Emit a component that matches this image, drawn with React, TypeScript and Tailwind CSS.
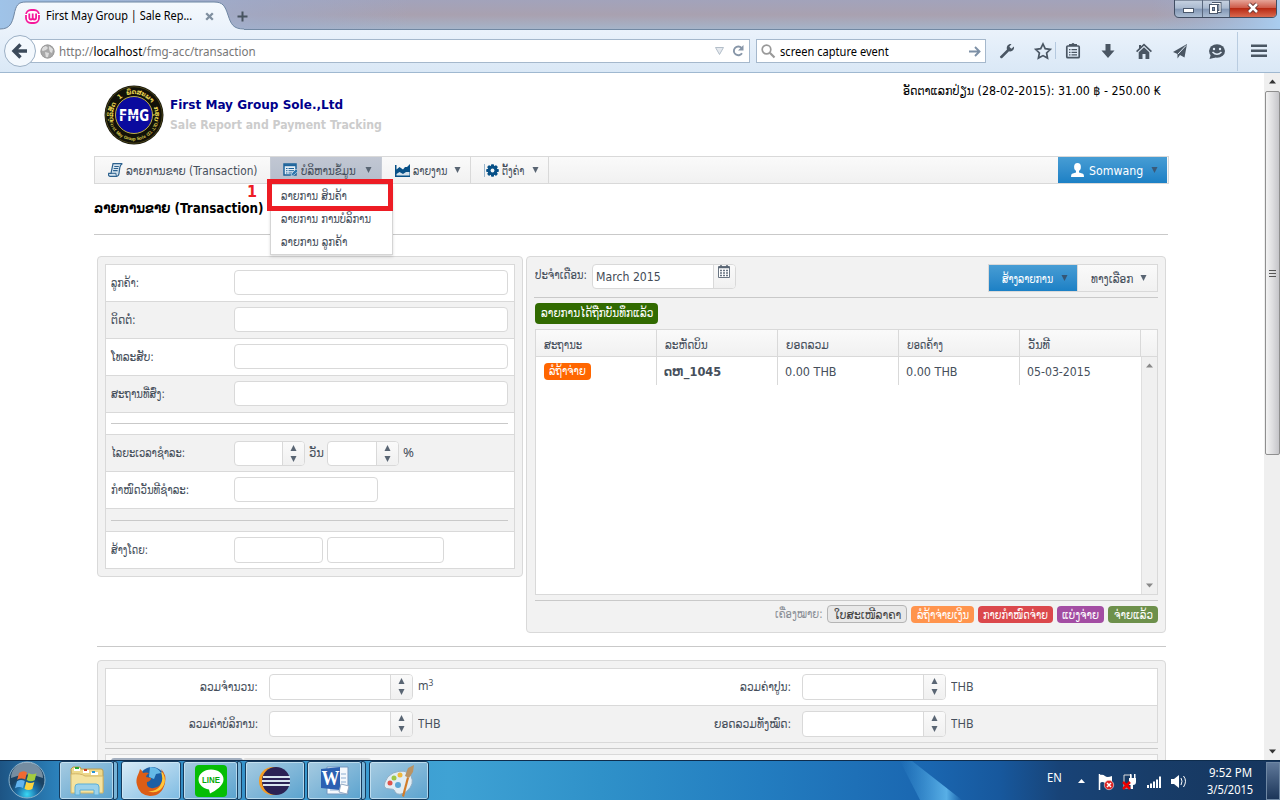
import { useLayoutEffect, useRef, type ReactNode } from "react";

/* Single line of text stretched to the width of its box. */
function Fit({ className, children }: { className: string; children: ReactNode }) {
  const box = useRef<HTMLSpanElement>(null);
  const inner = useRef<HTMLSpanElement>(null);
  useLayoutEffect(() => {
    if (!box.current || !inner.current) return;
    const natural = inner.current.offsetWidth;
    if (natural > 0) inner.current.style.transform = `scaleX(${box.current.clientWidth / natural})`;
  }, []);
  return (
    <span ref={box} className={`inline-block shrink-0 whitespace-nowrap ${className}`}>
      <span ref={inner} className="inline-block origin-left">{children}</span>
    </span>
  );
}

function Caret({ up = false, className = "text-[#596573]" }: { up?: boolean; className?: string }) {
  return (
    <svg className={`h-[6px] w-[7px] shrink-0 ${className}`} viewBox="0 0 7 6">
      <path d={up ? "M3.5 0L6.5 6H.5z" : "M.5 0h6L3.5 6z"} fill="currentColor" />
    </svg>
  );
}

function Field({ className }: { className: string }) {
  return <div className={`shrink-0 rounded-[4px] border border-[#d9d9d9] bg-white ${className}`} />;
}

function Spinner({ className }: { className: string }) {
  return (
    <div className={`flex shrink-0 overflow-hidden rounded-[4px] border border-[#d9d9d9] bg-white ${className}`}>
      <div className="flex-1" />
      <div className="flex w-[22px] flex-col items-center justify-center gap-[5px] border-l border-[#d9d9d9] bg-gradient-to-b from-[#fafafa] to-[#f0f0f0] pb-px">
        <Caret up />
        <Caret />
      </div>
    </div>
  );
}

function FormRow({ label, w, gray, children }: { label: string; w: string; gray?: boolean; children: ReactNode }) {
  return (
    <div className={`flex h-[37px] items-center border-b border-[#d9d9d9] pb-px pl-[5px] ${gray ? "bg-[#f2f2f2]" : "bg-white"}`}>
      <div className="w-[123px] shrink-0"><Fit className={w}>{label}</Fit></div>
      {children}
    </div>
  );
}

function Browser() {
  return (
    <div className="relative h-[73px] shrink-0">
      <div className="relative h-[30px] bg-gradient-to-b from-[#a2a3bb] via-[#a9a1b0] to-[#a5b5cb]">
        <svg className="absolute inset-0 h-[30px] w-[1280px]" viewBox="0 0 1280 30">
          <defs>
            <linearGradient id="glass" x1="0" x2="1"><stop stopColor="#9fc3e8" /><stop offset=".2" stopColor="#9eabcb" stopOpacity=".6" /><stop offset=".32" stopColor="#9eabcb" stopOpacity="0" /><stop offset=".9" stopColor="#9eabcb" stopOpacity="0" /><stop offset="1" stopColor="#a9cdf0" /></linearGradient>
            <linearGradient id="tab" x1="0" x2="0" y1="0" y2="1"><stop stopColor="#f5f9fd" /><stop offset="1" stopColor="#eaf2fb" /></linearGradient>
            <linearGradient id="red" x1="0" x2="0" y1="0" y2="1"><stop stopColor="#e6a498" /><stop offset=".45" stopColor="#ce5c4a" /><stop offset=".5" stopColor="#b82a14" /><stop offset="1" stopColor="#d9694f" /></linearGradient>
            <linearGradient id="win" x1="0" x2="0" y1="0" y2="1"><stop stopColor="#c8d3e2" /><stop offset=".48" stopColor="#a8b8ce" /><stop offset=".5" stopColor="#8195b3" /><stop offset="1" stopColor="#aebfd4" /></linearGradient>
          </defs>
          <rect width="1280" height="30" fill="url(#glass)" />
          <path d="M0 29.5H1280" stroke="#7188a3" />
          <path d="M0 30V29C10 29 12 23 14 15C16 5 18 2 26 2H214C223 2 225 6 228 15C231 24 233 29 244 29V30z" fill="url(#tab)" />
          <path d="M0 29C10 29 12 23 14 15C16 5 18 2 26 2H214C223 2 225 6 228 15C231 24 233 29 244 29" fill="none" stroke="#6f87a3" />
          <path d="M1174.500 0V13Q1174.500 17.500 1179 17.500H1272Q1276.500 17.500 1276.500 13V0z" fill="url(#win)" stroke="#414d62" />
          <path d="M1230 0V17H1272Q1276 17 1276 13V0z" fill="url(#red)" />
          <path d="M1202.500 0V17M1229.500 0V17" stroke="#5a687e" />
          <rect x="1183.500" y="8.500" width="10" height="4" fill="#fff" stroke="#4b586c" />
          <path d="M1212 3.500h8v8h-2" fill="none" stroke="#4b586c" strokeWidth="3" />
          <path d="M1212 3.500h8v8h-2" fill="none" stroke="#fff" strokeWidth="1.200" />
          <rect x="1209.500" y="4.500" width="8" height="9" fill="#fff" stroke="#4b586c" /><rect x="1212.500" y="7.500" width="2" height="3" fill="#8195b3" stroke="#4b586c" />
          <path d="M1249 4l8 8m0-8l-8 8" stroke="#66322f" strokeWidth="4.500" /><path d="M1249 4l8 8m0-8l-8 8" stroke="#fff" strokeWidth="2.500" />
        </svg>
        <div className="relative flex h-[30px] items-center pl-[25px] pt-[2px]">
          <svg className="h-[15px] w-[15px]" viewBox="0 0 15 15"><rect x="1" y="1" width="13" height="13" rx="5" fill="#fff" stroke="#f5189b" strokeWidth="1.800" /><path d="M0 5.500h3M12 5.500h3" stroke="#fff" strokeWidth="1" /><path d="M4.300 4.500v4q0 2 1.700 2t1.700-2v-4m0 4q0 2 1.700 2t1.700-2v-4" fill="none" stroke="#f5189b" strokeWidth="1.800" /></svg>
          <div className="ml-[6px] flex w-[155px] font-['Noto_Sans'] text-[12px] leading-[18px] text-black"><Fit className="w-[146px]">First May Group | Sale Rep...</Fit></div>
          <svg className="ml-[4px] h-[9px] w-[9px]" viewBox="0 0 9 9"><path d="M1.200 1.200l6.600 6.600m0-6.600L1.200 7.800" stroke="#7f8f9f" strokeWidth="2.300" /></svg>
          <svg className="ml-[23px] h-[11px] w-[11px]" viewBox="0 0 11 11"><path d="M5.500 .5v10M.5 5.500h10" stroke="#47535f" strokeWidth="2" /></svg>
        </div>
      </div>
      <div className="flex h-[43px] items-center border-b border-[#9fb8d0] bg-gradient-to-b from-[#eaf2fb] to-[#dae8f6] pl-[4px] font-['Noto_Sans'] text-[12px]">
        <svg className="relative z-10 h-[33px] w-[33px] shrink-0" viewBox="0 0 33 33"><circle cx="16" cy="16" r="15.500" fill="#f3f8fd" stroke="#9bafc4" /><path d="M23 16H10.500M16.500 9.500L10 16l6.500 6.500" fill="none" stroke="#3c4a5a" strokeWidth="3.400" /></svg>
        <div className="-ml-[7px] flex h-[24px] w-[720px] shrink-0 items-center border border-[#a5b8cc] bg-white pl-[9px] text-[#777]">
          <svg className="h-[15px] w-[15px]" viewBox="0 0 15 15"><circle cx="7.500" cy="7.500" r="7" fill="#a9a9a9" /><path d="M2 3L6 2 8 4 6 6 3 7 1 6zM9 2l4 3-1 4-2-1-1-3zM5 8l4 1-1 4-2 1z" fill="#dcdcdc" /><circle cx="7.500" cy="7.500" r="6.500" fill="none" stroke="#9d9d9d" /></svg>
          <Fit className="ml-[4px] w-[197px] pt-[2px]">http://<span className="text-black">localhost</span>/fmg-acc/transaction</Fit>
          <svg className="ml-auto h-[8px] w-[9px]" viewBox="0 0 9 8"><path d="M.5.5h8l-4 7z" fill="#e5e9ee" stroke="#b3bec9" /></svg>
          <svg className="ml-[8px] mr-[5px] h-[12px] w-[12px]" viewBox="0 0 12 12"><path d="M9.600 3A4.400 4.400 0 1 0 10 8.200" fill="none" stroke="#8796a8" strokeWidth="1.900" /><path d="M11.500 0v5.500H6z" fill="#8796a8" /></svg>
        </div>
        <div className="ml-[6px] flex h-[24px] w-[230px] shrink-0 items-center border border-[#a5b8cc] bg-white px-[4px] text-black">
          <svg className="h-[15px] w-[15px]" viewBox="0 0 15 15"><circle cx="5.500" cy="5.500" r="4.300" fill="none" stroke="#999" strokeWidth="1.700" /><path d="M8.800 8.800l4.700 4.700" stroke="#999" strokeWidth="2.200" /></svg>
          <Fit className="ml-[4px] w-[109px] pt-[2px]">screen capture event</Fit>
          <svg className="ml-auto h-[11px] w-[12px]" viewBox="0 0 12 11"><path d="M0 5.500h10M6 1l4.500 4.500L6 10" fill="none" stroke="#7d90a6" strokeWidth="1.900" /></svg>
        </div>
        <svg className="h-[42px] w-[294px] shrink-0 text-[#4a5663]" viewBox="986 30 294 42" fill="currentColor">
          <path d="M1000.500 56l6.500-6.500c-1-3.500 1.500-6 4.500-5.500l-2.200 2.700 2 2 2.700-2.200c.5 3.200-2 5.700-5 4.700l-6.500 6.500q-1 1.200-2.100.1t.1-1.800z" />
          <path d="M1043 44l2.200 4.700 5.100.7-3.700 3.600.9 5.100-4.500-2.500-4.600 2.500 1-5.100-3.700-3.600 5-.7z" fill="none" stroke="currentColor" strokeWidth="1.700" />
          <path d="M1055.500 42v17" stroke="#b5c9df" />
          <rect x="1066.800" y="46" width="12.400" height="11.700" rx="1" fill="none" stroke="currentColor" strokeWidth="1.700" /><path d="M1069 46v-2h2.500q1.500-2 3 0h2.500v2zM1069 49h1.500v1.300H1069zm2.500 0h5.500v1.300h-5.500zM1069 51.700h1.500v1.300H1069zm2.500 0h5.500v1.300h-5.500zM1069 54.300h1.500v1.300H1069zm2.500 0h5.500v1.300h-5.500z" />
          <path d="M1105.500 44h5v6.500h4l-6.500 7.500-6.500-7.500h4z" />
          <path d="M1144 43.500l8 7.500-1.200 1.200-6.800-6.400-6.800 6.400-1.200-1.200 3-2.800V45h2v1.300zM1138.700 52.200l5.300-5 5.300 5V59h-3.800v-5h-3v5h-3.800z" />
          <path d="M1187 44l-2.500 13.500-4.500-2.500-2.500 3.500V54l-4.500-2z" /><path d="M1186 45.500l-8 8.500" stroke="#e1ecf8" />
          <ellipse cx="1217" cy="51" rx="8" ry="6.800" /><path d="M1211 54l-1.500 5 6-1.500z" /><circle cx="1214" cy="49" r="1.200" fill="#e2edf8" /><circle cx="1220" cy="49" r="1.200" fill="#e2edf8" /><path d="M1212.500 52q4.500 4.500 9 0" fill="none" stroke="#e2edf8" strokeWidth="1.500" />
          <path d="M1237.500 32v39" stroke="#b9cce0" />
          <path d="M1251 44.500h16v2.500h-16zm0 5h16v2.500h-16zm0 5h16v2.500h-16z" />
        </svg>
      </div>
    </div>
  );
}

const topArc = ["ບໍ", "ລິ", "ສັ", "ດ", " ", "1", " ", "ພຶ", "ດ", "ສ", "ະ", "ພ", "າ", " ", "ກ", "ຣຸ", "ບ"];
const bottomArc = Array.from("First May Group Sole CO.,LTD.");

function Logo() {
  return (
    <svg className="h-[60px] w-[60px] shrink-0" viewBox="0 0 60 60">
      <circle cx="30" cy="30" r="29.500" fill="#111108" /><circle cx="30" cy="30" r="28.300" fill="none" stroke="#6f6321" strokeWidth=".6" />
      <circle cx="30" cy="30" r="18.500" fill="#0a0a9e" stroke="#bfae47" strokeWidth="1" />
      {topArc.map((c, i) => <text key={i} x="30" y="9" textAnchor="middle" transform={`rotate(${-101 + i * 12.600} 30 30)`} className="font-['DejaVu_Sans'] text-[6.5px] font-bold" fill="#e8d44f">{c}</text>)}
      {bottomArc.map((c, i) => <text key={i} x="30" y="55.500" textAnchor="middle" transform={`rotate(${72 - i * 5.150} 30 30)`} className="font-['Liberation_Sans'] text-[4.6px] font-bold" fill="#d5c24a">{c}</text>)}
      <text x="15" y="35.500" textLength="30" lengthAdjust="spacingAndGlyphs" className="font-['DejaVu_Sans'] text-[16px] font-bold" fill="#fff">FMG</text>
      <path d="M15 30.500h21" stroke="#0a0a9e" strokeWidth=".8" />
    </svg>
  );
}

function Menu() {
  return (
    <div className="relative flex h-[28px] w-[1075px] border border-[#d9d9d9] bg-gradient-to-b from-[#fafafa] to-[#f1f1f1]">
      <div className="flex w-[175px] items-center pl-[13px]">
        <svg className="h-[14px] w-[15px]" viewBox="0 0 15 14"><path d="M5 .7h9.300q-2 1-2.500 4L11 10.500q-.5 2.800-2.300 2.800H2Q0 13 .7 10.300H3z" fill="#d5e4ef" stroke="#2c618e" strokeWidth="1.200" /><path d="M3 10.300h5q-.3 2.800 1 3" fill="none" stroke="#2c618e" /><path d="M6.300 3.500h4.500M5.700 5.500h4.500M5.100 7.700h4.500" stroke="#2c618e" strokeWidth="1.200" /></svg>
        <Fit className="ml-[3px] w-[131px] pt-[2px]">ລາຍການຂາຍ (Transaction)</Fit>
      </div>
      <div className="flex w-[112px] items-center border-x border-[#c5cbd5] bg-gradient-to-b from-[#c1c7d3] to-[#b5bdcb] pl-[12px]">
        <svg className="h-[14px] w-[15px]" viewBox="0 0 15 14"><path d="M1 1h12v11H1z" fill="#e3edf5" stroke="#1d639b" strokeWidth="1.500" /><path d="M1 2.200h12" stroke="#1d639b" strokeWidth="2" /><path d="M3 5.500h1.500m1 0H11M3 7.700h1.500m1 0H11M3 10h1.500m1 0H9" stroke="#1d639b" /><path d="M8 13l1-3 4-4 2 2-4 4z" fill="#2e77ae" stroke="#e5edf5" strokeWidth=".5" /></svg>
        <Fit className="ml-[3px] w-[55px] pt-[2px]">ບໍລິຫານຂໍ້ມູນ</Fit>
        <Caret className="ml-[9px] text-[#596573]" />
      </div>
      <div className="flex w-[89px] items-center border-r border-[#d9d9d9] pl-[13px]">
        <svg className="h-[13px] w-[15px]" viewBox="0 0 15 13"><path d="M0 1h1.500v4.500L4.500 3l3.500 2.500L10 3h2l3-3v13H0z" fill="#075087" /><path d="M1.500 10L4.500 8 8 10l3-2h3.500v3.500h-13z" fill="#d4e1eb" /></svg>
        <Fit className="ml-[3px] w-[34px] pt-[2px]">ລາຍງານ</Fit>
        <Caret className="ml-[7px] text-[#596573]" />
      </div>
      <div className="flex w-[78px] items-center border-r border-[#d9d9d9] pl-[13px]">
        <svg className="h-[13px] w-[15px]" viewBox="-7.500 -6.500 15 13"><path d="M-7-6.500v13" stroke="#9ab6cc" />{[0, 45, 90, 135].map((a) => <rect key={a} x="-1.500" y="-6.300" width="3" height="12.600" rx=".8" fill="#075087" transform={`translate(1 0) rotate(${a})`} />)}<circle cx="1" r="4.900" fill="#075087" /><circle cx="1" r="1.900" fill="#f3f5f6" /></svg>
        <Fit className="ml-[3px] w-[22px] pt-[2px]">ຕັ້ງຄ່າ</Fit>
        <Caret className="ml-[8px] text-[#596573]" />
      </div>
      <div className="ml-auto mr-px flex w-[109px] items-center bg-gradient-to-b from-[#479dd4] to-[#1b80c5] pl-[13px] text-white">
        <svg className="h-[14px] w-[13px]" viewBox="0 0 13 14"><ellipse cx="6.500" cy="4" rx="3.400" ry="4" fill="#fff" /><path d="M5 6h3v3.500l4 1.200q1 .5 1 3.300H0q0-2.800 1-3.300l4-1.200z" fill="#fff" /></svg>
        <Fit className="ml-[5px] w-[54px] pt-[2px]">Somwang</Fit>
        <Caret className="ml-[8px] text-[#3a5a78]" />
      </div>
      <div className="absolute left-[175px] top-[27px] z-10 flex h-[71px] w-[123px] flex-col border border-[#d5d5d5] bg-white pl-[10px] shadow-[0_2px_3px_#0002]">
        <div className="flex h-[23px] items-center"><Fit className="w-[66px]">ລາຍການ ສິນຄ້າ</Fit></div>
        <div className="flex h-[23px] items-center"><Fit className="w-[90px]">ລາຍການ ການບໍລິການ</Fit></div>
        <div className="flex h-[24px] items-center"><Fit className="w-[66px]">ລາຍການ ລູກຄ້າ</Fit></div>
      </div>
      <div className="absolute left-[172px] top-[22px] z-20 h-[32px] w-[126px] border-[5px] border-[#ed1c24]" />
      <div className="absolute left-[152px] top-[26px] text-[16px] font-bold leading-[18px] text-[#ed1c24]">1</div>
    </div>
  );
}

function CustomerForm() {
  return (
    <div className="h-[321px] w-[426px] shrink-0 rounded-[4px] border border-[#d9d9d9] bg-[#f2f2f2] p-[7px]">
      <div className="border border-b-0 border-[#d9d9d9]">
        <FormRow label="ລູກຄ້າ:" w="w-[28px]"><Field className="h-[25px] w-[274px]" /></FormRow>
        <FormRow label="ຕິດຕໍ່:" w="w-[25px]" gray><Field className="h-[25px] w-[274px]" /></FormRow>
        <FormRow label="ໂທລະສັບ:" w="w-[43px]"><Field className="h-[25px] w-[274px]" /></FormRow>
        <FormRow label="ສະຖານທີ່ສົ່ງ:" w="w-[54px]" gray><Field className="h-[25px] w-[274px]" /></FormRow>
        <div className="flex h-[22px] items-center border-b border-[#d9d9d9] bg-white px-[5px]"><div className="h-px w-[397px] bg-[#c9c9c9]" /></div>
        <FormRow label="ໄລຍະເວລາຊຳລະ:" w="w-[74px]" gray>
          <Spinner className="mt-[2px] h-[25px] w-[71px]" />
          <Fit className="ml-[4px] w-[15px]">ວັນ</Fit>
          <Spinner className="ml-[3px] mt-[2px] h-[25px] w-[72px]" />
          <Fit className="ml-[4px] w-[11px] font-['Noto_Sans']">%</Fit>
        </FormRow>
        <FormRow label="ກຳໜົດວັນທີຊຳລະ:" w="w-[78px]"><Field className="h-[25px] w-[144px]" /></FormRow>
        <div className="flex h-[23px] items-center border-b border-[#d9d9d9] px-[5px]"><div className="h-px w-[397px] bg-[#c9c9c9]" /></div>
        <FormRow label="ສ້າງໂດຍ:" w="w-[37px]">
          <Field className="mt-px h-[26px] w-[89px]" />
          <Field className="ml-[4px] mt-px h-[26px] w-[117px]" />
        </FormRow>
      </div>
    </div>
  );
}

const columns = [
  { label: "ສະຖານະ", w: "w-[38px]" },
  { label: "ລະຫັດບິນ", w: "w-[43px]" },
  { label: "ຍອດລວມ", w: "w-[43px]" },
  { label: "ຍອດຄ້າງ", w: "w-[36px]" },
  { label: "ວັນທີ", w: "w-[22px]" },
];

function Transactions() {
  return (
    <div className="flex h-[377px] w-[640px] shrink-0 flex-col rounded-[4px] border border-[#d9d9d9] bg-[#f2f2f2] px-[7px] pt-[7px]">
      <div className="flex h-[34px] items-start border-b border-[#c9c9c9] pl-px">
        <Fit className="mt-[3px] w-[52px]">ປະຈຳເດືອນ:</Fit>
        <div className="ml-[5px] flex h-[25px] w-[144px] rounded-[4px] border border-[#d9d9d9] bg-white pl-[3px]">
          <div className="flex flex-1 items-center text-[#444b55]"><Fit className="w-[65px]">March 2015</Fit></div>
          <div className="flex w-[22px] justify-center rounded-r-[3px] border-l border-[#d9d9d9] bg-gradient-to-b from-[#fafafa] to-[#f0f0f0]">
            <svg className="mr-[2px] h-[13px] w-[12px]" viewBox="0 0 12 13"><path d="M.5 1.500h11v11H.5z" fill="#fff" stroke="#6a7582" /><path d="M.5 2.500h11M3 0v2m6-2v2" stroke="#596573" strokeWidth="1.500" /><path d="M2 5.500h8M2 8h8M2 10.500h8" stroke="#6a7582" strokeDasharray="2 1" strokeWidth="1.300" /></svg>
          </div>
        </div>
        <div className="ml-auto flex h-[28px] w-[170px] border border-[#d9d9d9] bg-gradient-to-b from-[#fafafa] to-[#f1f1f1]">
          <div className="flex w-[88px] items-center bg-gradient-to-b from-[#479dd4] to-[#1b80c5] pl-[13px] text-white">
            <Fit className="w-[51px] pt-[2px]">ສ້າງລາຍການ</Fit><Caret className="ml-[8px] text-[#355675]" />
          </div>
          <div className="flex flex-1 items-center border-l border-[#d9d9d9] pl-[13px]"><Fit className="w-[42px] pt-[2px]">ທາງເລືອກ</Fit><Caret className="ml-[7px] text-[#596573]" /></div>
        </div>
      </div>
      <div className="ml-px mt-[5px] flex h-[21px] w-[123px] items-center justify-center rounded-[4px] bg-[#316a00] pb-[2px] text-white"><Fit className="w-[112px]">ລາຍການໄດ້ຖືກບັນທຶກແລ້ວ</Fit></div>
      <div className="ml-px mt-[5px] flex h-[266px] w-[623px] flex-col border border-[#d9d9d9] bg-white">
        <div className="flex h-[27px] shrink-0 border-b border-[#d9d9d9] bg-gradient-to-b from-[#fafafa] to-[#f1f1f1]">
          {columns.map((c) => <div key={c.w + c.label} className="flex w-[121px] items-center border-r border-[#d9d9d9] pl-[8px] pt-[4px]"><Fit className={c.w}>{c.label}</Fit></div>)}
        </div>
        <div className="flex flex-1">
          <div className="flex h-[28px]">
            <div className="flex w-[121px] items-center border-r border-[#d9d9d9] pl-[8px]"><div className="flex h-[17px] w-[47px] items-center justify-center rounded-[4px] bg-[#ff6600] text-white"><Fit className="w-[37px]">ລໍຖ້າຈ່າຍ</Fit></div></div>
            <div className="flex w-[121px] items-center border-r border-[#d9d9d9] pl-[7px] pt-px font-bold"><Fit className="w-[57px]">ດຫ_1045</Fit></div>
            <div className="flex w-[121px] items-center border-r border-[#d9d9d9] pl-[7px] pt-px"><Fit className="w-[52px]">0.00 THB</Fit></div>
            <div className="flex w-[121px] items-center border-r border-[#d9d9d9] pl-[7px] pt-px"><Fit className="w-[52px]">0.00 THB</Fit></div>
            <div className="flex w-[120px] items-center pl-[7px] pt-px"><Fit className="w-[64px]">05-03-2015</Fit></div>
          </div>
          <div className="ml-px flex flex-1 flex-col items-center justify-between border-l border-[#dfdfdf] bg-[#f0f0f0] py-[6px] text-[#888]">
            <svg className="h-[5px] w-[7px]" viewBox="0 0 7 5"><path d="M0 4.500h7L3.500.5z" fill="currentColor" /></svg>
            <svg className="h-[5px] w-[7px]" viewBox="0 0 7 5"><path d="M0 .5h7L3.500 4.500z" fill="currentColor" /></svg>
          </div>
        </div>
      </div>
      <div className="ml-px mt-[5px] flex items-start justify-end border-t border-[#c9c9c9] pt-[4px] text-white">
        <Fit className="mr-[4px] mt-px w-[48px] text-[#8a8f96]">ເຄື່ອງໝາຍ:</Fit>
        <div className="flex h-[18px] w-[80px] items-center justify-center rounded-[4px] border border-[#b5b5b5] bg-[#e8e8e8] text-[#444]"><Fit className="w-[67px] pt-px">ໃບສະເໜີລາຄາ</Fit></div>
        <div className="ml-[4px] mt-px flex h-[17px] w-[63px] items-center justify-center rounded-[4px] bg-[#ff944d]"><Fit className="w-[52px]">ລໍຖ້າຈ່າຍເງິນ</Fit></div>
        <div className="ml-[4px] mt-px flex h-[17px] w-[75px] items-center justify-center rounded-[4px] bg-[#db484c]"><Fit className="w-[65px]">ກາຍກຳໜົດຈ່າຍ</Fit></div>
        <div className="ml-[4px] mt-px flex h-[17px] w-[47px] items-center justify-center rounded-[4px] bg-[#a34da3]"><Fit className="w-[37px]">ແບ່ງຈ່າຍ</Fit></div>
        <div className="ml-[4px] mt-px flex h-[17px] w-[50px] items-center justify-center rounded-[4px] bg-[#6d904b]"><Fit className="w-[39px]">ຈ່າຍແລ້ວ</Fit></div>
      </div>
    </div>
  );
}

function Total({ label, w, boxClass, children }: { label: string; w: string; boxClass: string; children: ReactNode }) {
  return (
    <div className={`flex items-center ${boxClass}`}>
      <div className="flex flex-1 justify-end"><Fit className={w}>{label}</Fit></div>
      <Spinner className="ml-[11px] h-[26px] w-[144px]" />
      <div className="ml-[5px] w-[26px] font-['Noto_Sans']">{children}</div>
    </div>
  );
}

function Totals() {
  return (
    <div className="mt-[13px] h-[120px] w-[1069px] rounded-t-[4px] border border-[#d9d9d9] bg-[#f2f2f2] p-[7px]">
      <div className="border border-[#d9d9d9]">
        <div className="flex h-[37px] border-b border-[#d9d9d9] bg-white">
          <Total label="ລວມຈຳນວນ:" w="w-[58px]" boxClass="w-[338px]"><Fit className="w-[15px] pb-[2px]">m<sup className="text-[9px]">3</sup></Fit></Total>
          <Total label="ລວມຄ່າປູນ:" w="w-[51px]" boxClass="w-[533px]"><Fit className="w-[22px]">THB</Fit></Total>
        </div>
        <div className="flex h-[36px]">
          <Total label="ລວມຄ່າບໍລິການ:" w="w-[69px]" boxClass="w-[338px]"><Fit className="w-[22px]">THB</Fit></Total>
          <Total label="ຍອດລວມທັງໝົດ:" w="w-[77px]" boxClass="w-[533px]"><Fit className="w-[22px]">THB</Fit></Total>
        </div>
      </div>
      <div className="mt-[5px] h-px bg-[#c9c9c9]" />
      <div className="mt-[5px] flex h-[20px] border border-[#d9d9d9] bg-[#f8f8f8] pl-[5px] pt-[3px]">
        <div className="w-[132px] rounded-t-[3px] bg-[#a3afbf]" /><div className="w-[128px] rounded-t-[3px] bg-[#e0e0e0]" />
      </div>
    </div>
  );
}

function PageScroll() {
  return (
    <div className="flex w-[16px] shrink-0 flex-col items-center bg-[#efefef]">
      <svg className="mt-[6px] h-[5px] w-[7px]" viewBox="0 0 7 5"><path d="M0 4.500h7L3.500.5z" fill="#333" /></svg>
      <div className="mt-[7px] flex h-[364px] w-[15px] flex-col items-center justify-center gap-[2px] rounded-[2px] border border-[#8f8f8f] bg-gradient-to-r from-[#f3f3f3] via-[#dedee0] to-[#c5c5c9]">
        <div className="h-px w-[7px] bg-[#555]" /><div className="h-px w-[7px] bg-[#555]" /><div className="h-px w-[7px] bg-[#555]" />
      </div>
      <svg className="mb-[6px] mt-auto h-[5px] w-[7px]" viewBox="0 0 7 5"><path d="M0 .5h7L3.500 4.500z" fill="#333" /></svg>
    </div>
  );
}

function TaskButton({ stacked, active, children }: { stacked?: boolean; active?: boolean; children: ReactNode }) {
  return (
    <div className="flex h-[39px] w-[62px] shrink-0">
      <div className={`z-10 flex h-[39px] shrink-0 items-center justify-center rounded-[3px] border border-[#163b5d] shadow-[inset_0_0_0_1px_#d7edf9aa] ${stacked ? "w-[55px]" : "w-[60px]"} ${active ? "bg-gradient-to-br from-[#d9ebf6] to-[#7dbbe2]" : "bg-gradient-to-br from-[#a6cbe1] to-[#5aa3cf]"}`}>{children}</div>
      {stacked && <div className="-ml-px h-[39px] w-[5px] rounded-r-[3px] border border-[#163b5d] bg-[#76b3d7]" />}
    </div>
  );
}

function Taskbar() {
  return (
    <div className="relative flex h-[40px] shrink-0 items-start border-t border-[#0e2c4c] bg-[linear-gradient(90deg,#1d5484_0,#2c83bd_60px,#3a9ad0_330px,#3fa2d4_450px,#2f91c9_600px,#237dc0_760px,#1a66b0_930px,#17589d_1000px,#184377_1060px,#183d69_1150px,#16355d_1280px)] font-['Noto_Sans'] text-white">
      <svg className="absolute left-[900px] top-0 h-[39px] w-[70px]" viewBox="0 0 70 39"><defs><linearGradient id="gleam" x1="0" x2="1"><stop stopColor="#54b4ee" stopOpacity="0" /><stop offset=".75" stopColor="#68c2f5" stopOpacity=".8" /><stop offset="1" stopColor="#54b4ee" stopOpacity="0" /></linearGradient></defs><path d="M0 0H12L62 39H20z" fill="url(#gleam)" /></svg>
      <svg className="ml-[8px] h-[38px] w-[38px] shrink-0" viewBox="0 0 38 38">
        <defs><radialGradient id="orb" cy=".9"><stop stopColor="#39d9f5" /><stop offset=".55" stopColor="#1c70aa" /><stop offset="1" stopColor="#1a4263" /></radialGradient></defs>
        <circle cx="19" cy="19" r="18" fill="url(#orb)" stroke="#8bb2cb" /><path d="M3 17A16 16 0 0 1 35 17Q19 10 3 17z" fill="#ffffff66" />
        <path d="M11 12q4-3 8-.5l-1.800 7q-4-2.200-8 .2z" fill="#ef6a32" /><path d="M20.500 12q4 2.500 8 .2l-1.800 7q-4 2.200-8-.2z" fill="#a3cc3f" /><path d="M9 20.300q4-2.500 7.800-.2L15 27q-4-2.300-8 .2z" fill="#62b3ee" /><path d="M18.300 20.800q4 2.300 8 .2l-2 7q-4 2.300-7.800-.2z" fill="#fcd33f" />
      </svg>
      <div className="ml-[13px] flex">
        <TaskButton stacked><svg className="h-[31px] w-[34px]" viewBox="0 0 34 31"><path d="M1 4l2-2h7l1 2h20q2 0 2 2v21H2z" fill="#eed98b" stroke="#bd9d4d" /><path d="M4 3h6v3H4zM13 5h6v3h-6zM21 7h7v3h-7z" fill="#fff" /><path d="M5 2h4v2H5z" fill="#28a531" /><path d="M14 4h3v2h-3z" fill="#cf3d22" /><path d="M22 6h3v2h-3z" fill="#2894d5" /><path d="M1 9q10-1 14 2h18v17H1z" fill="#f4e3a0" stroke="#d2b567" /><path d="M5 30V22q0-3 3-3h18q3 0 3 3v8h-5v-5H10v5z" fill="#9bd2ec" stroke="#5baed8" /></svg></TaskButton>
        <TaskButton active><svg className="h-[32px] w-[32px]" viewBox="0 0 32 32"><circle cx="17" cy="15" r="13" fill="#1c5fa5" /><path d="M15 2q8 0 11 6l-5 1-2 5-5-2z" fill="#65b9e6" /><path d="M26 4q6 6 4 14-3 13-15 13Q4 30 2 20C0 13 4 9 5 4q2 1 3 4 3-1 6 0-3 2-3 4l5 1q0 3-4 4-1 5 4 6 5 1 9-3 5-7 1-16z" fill="#dc5d16" /><path d="M28 8q5 10-3 17-6 4-12 1 8 1 12-5 4-6 1-14z" fill="#ffc73a" /></svg></TaskButton>
        <TaskButton stacked><svg className="h-[32px] w-[32px]" viewBox="0 0 32 32"><rect width="32" height="32" rx="4" fill="#05bd05" /><path d="M16 4.500C9 4.500 3.500 9 3.500 14.500c0 5 4.500 9 10.500 10l1 4c6-3 13.500-8 13.500-14S23 4.500 16 4.500z" fill="#fff" /><text x="7" y="18" textLength="18" lengthAdjust="spacingAndGlyphs" className="font-['Liberation_Sans'] text-[9px] font-bold" fill="#05a805">LINE</text></svg></TaskButton>
        <TaskButton><svg className="h-[32px] w-[34px]" viewBox="0 0 34 32"><circle cx="15" cy="16" r="14" fill="#f59b22" /><circle cx="18" cy="16" r="14" fill="#2b2255" /><path d="M5 12h27M4 16h28M5 20h27" stroke="#d8e5ef" strokeWidth="2" /></svg></TaskButton>
        <TaskButton stacked><svg className="h-[32px] w-[32px]" viewBox="0 0 32 32"><path d="M8 2h21v27H8z" fill="#f4f8fc" stroke="#7397c0" /><path d="M22 9h5m-5 4h5m-5 4h5M11 25h13" stroke="#8caed2" /><path d="M2 4l19-2v23L2 23z" fill="#2b60b2" /><text x="2.500" y="20" textLength="18" lengthAdjust="spacingAndGlyphs" className="font-['Liberation_Serif'] text-[20px] font-bold" fill="#fff">W</text><path d="M22 19l8 2-2 8-8-2z" fill="#fff" stroke="#93a9c3" /></svg></TaskButton>
        <TaskButton><svg className="h-[34px] w-[34px]" viewBox="0 0 34 34"><path d="M11 9Q24 4 29 12q4 8-4 15-8 6-12 1 0-3-5-3Q0 25 3 18q2-6 8-9z" fill="#e2edf4" stroke="#91aec4" /><circle cx="8" cy="19" r="2.500" fill="#df534b" /><circle cx="12" cy="14" r="2.500" fill="#9dc747" /><circle cx="18" cy="11" r="2.500" fill="#efb83d" /><circle cx="16" cy="21" r="3" fill="#5ba6d5" /><path d="M20 32l5-19 2 1-5 19z" fill="#d27c29" /><path d="M23 12l3-8 6-3-1 7-4 6z" fill="#ba9364" /></svg></TaskButton>
      </div>
      <div className="ml-auto flex h-[39px] items-center">
        <Fit className="mb-[5px] mr-[16px] w-[15px] text-[12px]">EN</Fit>
        <svg className="mt-[2px] h-[18px] w-[110px]" viewBox="1079 773 110 18" fill="#fff">
          <path d="M1079 783h7l-3.500-4z" />
          <path d="M1100.500 774v16" stroke="#fff" strokeWidth="1.500" /><path d="M1101 775q3-1 5 1t7 0v7q-4 2-7 0t-5 0z" /><circle cx="1110" cy="785" r="4.700" fill="#d22" stroke="#eee" strokeWidth=".6" /><path d="M1108 783l4 4m0-4l-4 4" stroke="#fff" strokeWidth="1.500" />
          <path d="M1125 775h7v13h-7z" fill="#173a64" stroke="#ddd" /><path d="M1130 778h7v4q0 3-3 3v4h-2v-4h-2zM1131 774h1.500v4h-1.500zM1135 774h1.500v4h-1.500z" /><path d="M1124 782l7 7m0-7l-7 7" stroke="#e00" strokeWidth="2.500" />
          <path d="M1148 785h2v3h-2zm3-1.500h2v4.500h-2zm3-2h2v6.500h-2zm3-2h2v8.500h-2zm3-3h2v11.500h-2z" />
          <path d="M1172 779h3l5-4v13l-5-4h-3z" /><path d="M1182 778q2 3 0 7m2.500-9q4 5 0 11" fill="none" stroke="#fff" />
        </svg>
        <div className="ml-[19px] flex w-[46px] flex-col items-center text-[12px] leading-[17px]"><Fit className="w-[43px]">9:52 PM</Fit><Fit className="w-[46px]">3/5/2015</Fit></div>
        <div className="ml-[13px] h-[38px] w-[14px] border border-[#6f88a4] bg-gradient-to-b from-[#60799a] to-[#1c3659]" />
      </div>
    </div>
  );
}

export default function App() {
  return (
    <div className="flex h-[800px] w-[1280px] flex-col overflow-hidden bg-white">
      <Browser />
      <div className="flex h-[687px] shrink-0 overflow-hidden">
        <main className="w-[1264px] pl-[94px] font-['DejaVu_Sans_Condensed','DejaVu_Sans',sans-serif] text-[12px] leading-[16px] text-[#464f5b]">
          <header className="flex h-[83px] w-[1074px] items-start pl-[10px] pt-[12px]">
            <Logo />
            <div className="ml-[6px] mt-[12px] flex flex-col gap-[4px] text-[13px] font-bold"><Fit className="w-[173px] text-[#00008b]">First May Group Sole.,Ltd</Fit><Fit className="w-[212px] text-[#ccc]">Sale Report and Payment Tracking</Fit></div>
            <Fit className="ml-auto mr-[7px] mt-[-2px] w-[258px] text-black">ອັດຕາແລກປ່ຽນ (28-02-2015): 31.00 ฿ - 250.00 ₭</Fit>
          </header>
          <Menu />
          <div className="flex h-[51px] w-[1074px] items-center border-b border-[#c9c9c9] pb-[3px] text-[14px] font-bold text-black"><Fit className="w-[170px]">ລາຍການຂາຍ (Transaction)</Fit></div>
          <div className="ml-[3px] mt-[21px] flex h-[391px] w-[1069px] items-start gap-[3px] border-b border-[#c9c9c9]">
            <CustomerForm />
            <Transactions />
          </div>
          <div className="ml-[3px]"><Totals /></div>
        </main>
        <PageScroll />
      </div>
      <Taskbar />
    </div>
  );
}
